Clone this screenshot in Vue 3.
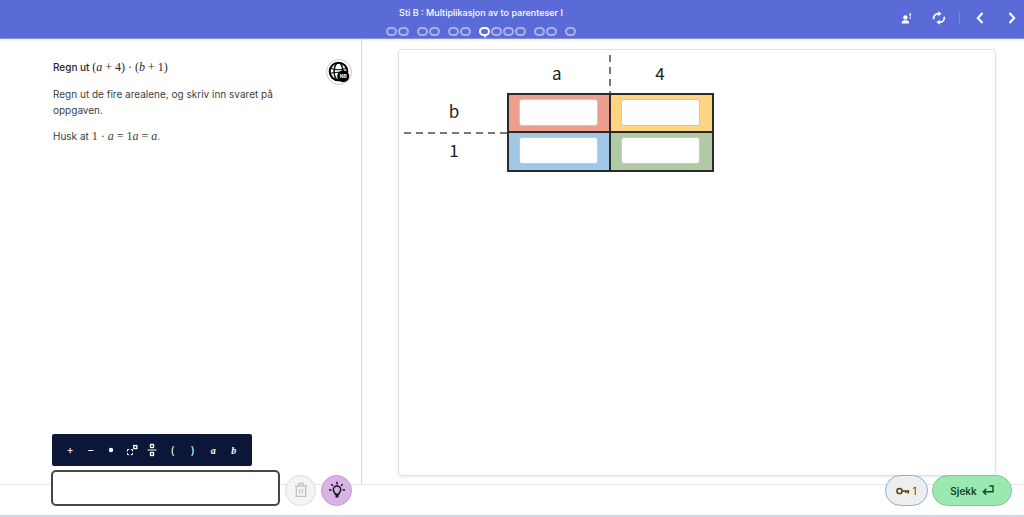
<script setup>
import { ref, reactive } from 'vue'

const groups = [
  [0, 0],
  [0, 0],
  [0, 0],
  [1, 0, 0, 0],
  [0, 0],
  [0],
]
const areas = reactive({ ab: '', b4: '', a1: '', four: '' })
const answer = ref('')
</script>

<template>
  <div class="app">
    <header class="topbar">
      <div class="lesson">
        <h1>Sti B : Multiplikasjon av to parenteser I</h1>
        <nav class="steps" aria-label="Oppgaver">
          <div v-for="(group, g) in groups" :key="g" class="group">
            <button v-for="(active, i) in group" :key="i" type="button" class="step" :class="{ active }" :aria-label="`Oppgave ${g + 1}.${i + 1}`"></button>
          </div>
        </nav>
      </div>
      <div class="actions">
        <div class="tools">
          <button type="button" aria-label="Hjelp">
            <svg width="12" height="12" viewBox="0 0 12 12" fill="#fff">
              <circle cx="4.400" cy="5.400" r="2.200" />
              <path d="M.8 11.600v-1.400C.8 8.900 2.600 8.300 4.400 8.300S8 8.900 8 10.200v1.400z" />
              <path d="M8.400 1.200h1.700l-.4 3.300h-1zM8.500 5.200h1.500v1.400H8.500z" />
            </svg>
          </button>
          <button type="button" aria-label="Start på nytt">
            <svg width="14" height="14" viewBox="0 0 14 14" fill="none" stroke="#fff" stroke-width="1.700">
              <path d="M1.800 8.200C1 4.800 3.500 2.500 7.200 2.700M12.200 5.800C13 9.200 10.500 11.500 6.800 11.300" />
              <path d="M6.200 .3L9.600 2.800 6.200 5.300zM7.800 8.700L4.400 11.200l3.400 2.500z" fill="#fff" stroke="none" />
            </svg>
          </button>
        </div>
        <div class="pager">
          <button type="button" aria-label="Forrige">
            <svg width="8" height="12" viewBox="0 0 8 12" fill="none" stroke="#fff" stroke-width="2"><path d="M6.500 1L1.800 6l4.700 5" /></svg>
          </button>
          <button type="button" aria-label="Neste">
            <svg width="8" height="12" viewBox="0 0 8 12" fill="none" stroke="#fff" stroke-width="2"><path d="M1.500 1l4.700 5-4.700 5" /></svg>
          </button>
        </div>
      </div>
    </header>

    <main class="workspace">
      <section class="task">
        <div class="prose">
          <h2>Regn ut <span class="math">(<i>a</i><b>+</b>4)<b>·</b>(<i>b</i><b>+</b>1)</span></h2>
          <p>Regn ut de fire arealene, og skriv inn svaret på oppgaven.</p>
          <p>Husk at <span class="math">1<b>·</b><i>a</i><b>=</b>1<i>a</i><b>=</b><i>a</i></span>.</p>
        </div>
        <button type="button" class="language" aria-label="Språk: NB">
          <svg width="22" height="22" viewBox="0 0 22 22">
            <g fill="none" stroke="#000">
              <circle cx="10.500" cy="10.500" r="8.800" stroke-width="2" />
              <ellipse cx="10.500" cy="10.500" rx="4.400" ry="8.600" stroke-width="1.400" />
              <path d="M3 7.500Q10.500 10 18 7.500M2 12.500Q10.500 10 19 12.500" stroke-width="1.100" />
            </g>
            <circle cx="15.200" cy="15.200" r="6" />
            <text x="15.200" y="17.200" text-anchor="middle">NB</text>
          </svg>
        </button>
      </section>

      <section class="board">
        <div class="figure">
          <span></span>
          <span class="label">a</span>
          <span class="label split-v">4</span>
          <span class="label">b</span>
          <label class="cell red"><input v-model="areas.ab" type="text" aria-label="Areal a · b" /></label>
          <label class="cell yellow"><input v-model="areas.b4" type="text" aria-label="Areal 4 · b" /></label>
          <span class="label split-h">1</span>
          <label class="cell blue"><input v-model="areas.a1" type="text" aria-label="Areal a · 1" /></label>
          <label class="cell green"><input v-model="areas.four" type="text" aria-label="Areal 4 · 1" /></label>
        </div>
      </section>
    </main>

    <footer class="dock">
      <div class="composer">
        <div class="keys" role="toolbar" aria-label="Mattesymboler">
          <button type="button">+</button>
          <button type="button">−</button>
          <button type="button" aria-label="Gange"><svg width="6" height="6" viewBox="0 0 6 6"><circle cx="3" cy="3" r="2.200" fill="#fff" /></svg></button>
          <button type="button" aria-label="Potens">
            <svg width="12" height="14" viewBox="0 0 12 14" fill="none" stroke="#fff">
              <path d="M1.500 8.500v-2h1.700M4.800 6.500h1.700v2M6.500 10v1.700H4.800M3.200 11.700H1.500V10" />
              <rect x="7.800" y="2.600" width="3" height="3" stroke-width="1.300" />
            </svg>
          </button>
          <button type="button" aria-label="Brøk">
            <svg width="10" height="14" viewBox="0 0 10 14" fill="none" stroke="#fff">
              <rect x="3.500" y="1.500" width="3" height="3" stroke-width="1.300" />
              <path d="M.5 7h9" />
              <rect x="3.500" y="9.500" width="3" height="3" stroke-width="1.300" />
            </svg>
          </button>
          <button type="button">(</button>
          <button type="button">)</button>
          <button type="button" class="var">a</button>
          <button type="button" class="var">b</button>
        </div>
        <div class="entry">
          <input v-model="answer" type="text" aria-label="Svar" />
          <button type="button" class="round trash" aria-label="Slett">
            <svg width="14" height="16" viewBox="0 0 14 16" fill="none" stroke="#bfc1c4" stroke-width="1.300">
              <path d="M1 4h12M4.800 3.800V1.500h4.400v2.300M2.300 4v10.300h9.400V4" />
              <path d="M5.600 7v4.500M8.400 7v4.500" />
            </svg>
          </button>
          <button type="button" class="round hint" aria-label="Hint">
            <svg width="18" height="18" viewBox="0 0 18 18" fill="none" stroke="#171321" stroke-width="1.500">
              <path d="M7.300 13.200c0-1.500-2-2.200-2-4.500a3.700 3.700 0 0 1 7.400 0c0 2.300-2 3-2 4.500z" />
              <path d="M7.500 15.200h3" stroke-width="2.600" />
              <path d="M9 .8v2.600M3.300 3.200l1.600 1.600M14.700 3.200l-1.600 1.600M1 9h2.400M14.600 9H17" />
            </svg>
          </button>
        </div>
      </div>
      <div class="submit">
        <button type="button" class="pill credits" aria-label="Nøkler: 1">
          <svg width="14" height="8" viewBox="0 0 14 8" fill="none" stroke="#5c3c0c" stroke-width="1.500">
            <circle cx="3.500" cy="4" r="2.600" />
            <path d="M6.100 4h7.200M12.300 4v2.600M9.800 4v2" />
          </svg>
          <span>1</span>
        </button>
        <button type="button" class="pill check">
          <span>Sjekk</span>
          <svg width="12" height="11" viewBox="0 0 12 11" fill="none" stroke="#17442a" stroke-width="1.400"><path d="M7.500 1H11v5.800H1.500M4.300 3.800l-3 3 3 3" /></svg>
        </button>
      </div>
    </footer>
  </div>
</template>

<style>
body {
  margin: 0;
  background: #fff;
}
</style>

<style scoped>
.app {
  display: flex;
  flex-direction: column;
  min-height: 100vh;
  font-family: Inter, sans-serif;
  color: #3b3e43;
}
.app *,
.app {
  box-sizing: border-box;
}
button {
  display: flex;
  align-items: center;
  justify-content: center;
  padding: 0;
  border: 0;
  background: none;
  font-family: inherit;
  cursor: pointer;
}
input {
  min-width: 0;
  font: 12px Inter, sans-serif;
}
.topbar {
  display: grid;
  grid-template-columns: 1fr 126px;
  height: 39px;
  padding-left: 64px;
  background: #5a6bd8;
  border-bottom: 1px solid #8792e0;
  box-shadow: 0 1px 2px #00000018;
}
.lesson {
  display: flex;
  flex-direction: column;
  align-items: center;
  padding-top: 7px;
}
h1 {
  margin: 0;
  font-size: 9px;
  line-height: 12px;
  font-weight: 500;
  color: #fff;
}
.steps {
  display: flex;
  gap: 8px;
  margin-top: 8px;
}
.group {
  display: flex;
  gap: 1px;
}
.step {
  width: 11px;
  height: 9px;
  border: 2px solid #a9b2ea;
  border-radius: 5px;
}
.step.active {
  position: relative;
  border-color: #fff;
}
.step.active::after {
  content: "";
  position: absolute;
  top: 6px;
  left: 2px;
  border: 2px solid transparent;
  border-top: 3px solid #fff;
  border-bottom: 0;
}
.actions {
  display: flex;
  align-items: center;
  justify-content: flex-end;
  gap: 13px;
  padding: 0 8px 2px 0;
}
.tools {
  display: flex;
  gap: 19px;
}
.pager {
  display: flex;
  gap: 24px;
  padding-left: 16px;
  border-left: 1px solid #7886df;
}
.workspace {
  flex: 1;
  display: grid;
  grid-template-columns: 6fr 11fr;
}
.task {
  display: flex;
  justify-content: space-between;
  align-items: flex-start;
  margin-right: -1px;
  padding: 20px 9px 0 53px;
  border-right: 1px solid #d5d7da;
}
.prose {
  width: 236px;
  font-size: 10px;
  line-height: 16px;
}
h2 {
  margin: 0 0 11px;
  font-size: 10px;
  line-height: 16px;
  font-weight: 500;
  color: #26292d;
}
p {
  margin: 0 0 10px;
}
.math {
  font-family: "Liberation Serif", serif;
  font-size: 12px;
  line-height: 12px;
  font-weight: 400;
}
.math b {
  margin: 0 3px;
  font-weight: 400;
}
.language {
  width: 26px;
  height: 26px;
  border: 1px solid #c8c8cf;
  border-radius: 50%;
}
.language text {
  font: 700 5px Inter, sans-serif;
  fill: #fff;
}
.board {
  margin: 10px 28px 8px 37px;
  padding: 5px;
  border: 1px solid #dfe1e3;
  border-radius: 4px;
  box-shadow: 0 1px 3px #00000018;
}
.figure {
  display: grid;
  grid-template-columns: repeat(3, 103px);
  grid-template-rows: 38px 39px 39px;
}
.label {
  position: relative;
  padding-right: 4px;
  font: 17px/35px "Noto Sans CJK SC", sans-serif;
  text-align: center;
  color: #222;
}
.split-v::before,
.split-h::before {
  content: "";
  position: absolute;
  top: 0;
  left: -1px;
}
.split-v::before {
  width: 2px;
  height: 100%;
  background: repeating-linear-gradient(#777 0 7px, transparent 7px 12px);
}
.split-h::before {
  left: 0;
  width: 100%;
  height: 2px;
  background: repeating-linear-gradient(90deg, #777 0 7px, transparent 7px 12px);
}
.cell {
  display: flex;
  align-items: center;
  justify-content: center;
  margin: 0 -1px -1px 0;
  padding: 0 2px 2px 0;
  border: 2px solid #2c2a28;
}
.yellow,
.green {
  margin-left: -1px;
}
.blue,
.green {
  margin-top: -1px;
}
.cell input {
  width: 79px;
  height: 27px;
  border: 1px solid #c9c9c9;
  border-radius: 3px;
  background: #fff;
}
.red { background: #ee9e8f; }
.yellow { background: #ffd583; }
.blue { background: #9fc8e8; }
.green { background: #afcaa5; }
.dock {
  display: flex;
  justify-content: space-between;
  align-items: flex-end;
  height: 33px;
  padding: 0 12px 9px 51px;
  border-top: 1px solid #e5e6e8;
  border-bottom: 2px solid #cbd9ec;
}
.composer,
.submit {
  position: relative;
}
.keys {
  display: flex;
  width: 200px;
  height: 32px;
  margin: 0 0 4px 1px;
  padding: 0 8px;
  border-radius: 2px;
  background: #0c1638;
}
.keys button {
  flex: 1;
  color: #fff;
  font-size: 11px;
}
.keys .var {
  font: italic 700 10px "Liberation Serif", serif;
}
.entry {
  display: flex;
  align-items: center;
  gap: 5px;
}
.entry input {
  width: 229px;
  height: 36px;
  padding: 0 8px;
  border: 2px solid #46474a;
  border-radius: 5px;
  background: #fff;
}
.round {
  width: 31px;
  height: 31px;
  margin-top: 4px;
  border-radius: 50%;
}
.trash {
  border: 1px solid #dcdcde;
  background: #f4f4f5;
}
.hint {
  border: 1px solid #c595d8;
  background: #d9b3e6;
}
.submit {
  display: flex;
  gap: 4px;
}
.pill {
  height: 31px;
  border-radius: 16px;
  font-size: 10px;
}
.credits {
  width: 43px;
  gap: 2px;
  border: 1px solid #7fb2dc;
  background: #eeeeef;
  color: #5c3c2c;
}
.check {
  width: 80px;
  gap: 5px;
  border: 1px solid #7fc795;
  background: #9be8b0;
  color: #17442a;
  font-weight: 600;
}
</style>
